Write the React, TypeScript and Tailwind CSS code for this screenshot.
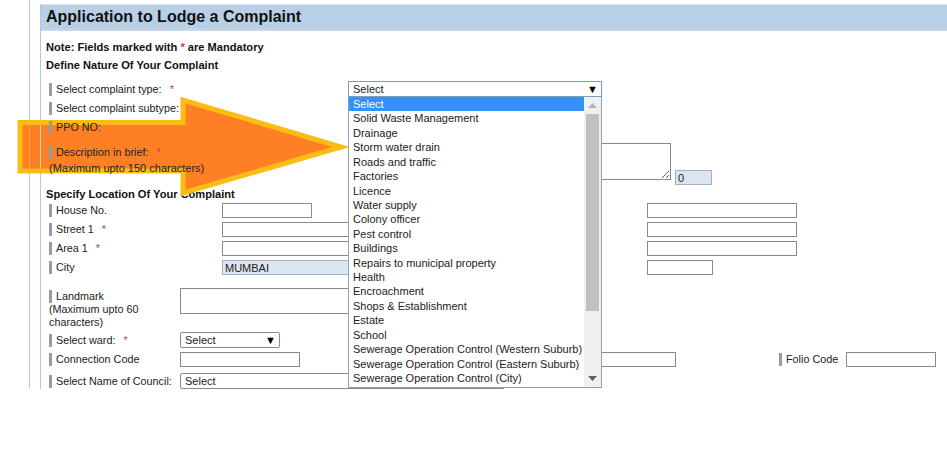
const complaintTypes = [
  'Select',
  'Solid Waste Management',
  'Drainage',
  'Storm water drain',
  'Roads and traffic',
  'Factories',
  'Licence',
  'Water supply',
  'Colony officer',
  'Pest control',
  'Buildings',
  'Repairs to municipal property',
  'Health',
  'Encroachment',
  'Shops & Establishment',
  'Estate',
  'School',
  'Sewerage Operation Control (Western Suburb)',
  'Sewerage Operation Control (Eastern Suburb)',
  'Sewerage Operation Control (City)',
];

const inputCls = 'h-[15px] border border-[#8a8a8a] bg-white block shrink-0';
const headingCls = 'h-[14px] flex items-center font-bold text-[11.1px] text-[#111]';

function Label({ text, required, className = '' }: { text: string; required?: boolean; className?: string }) {
  return (
    <span className={`flex items-center shrink-0 text-[10.8px] ${className}`}>
      <span className="w-[3px] h-[13px] bg-[#969ca6] mr-[4px] shrink-0" />
      <span>{text}</span>
      {required ? <span className="text-[#b5454a] ml-[8px]">*</span> : null}
    </span>
  );
}

function NativeSelect({ className }: { className: string }) {
  return (
    <div className={`flex items-center justify-between border border-[#8a8a8a] rounded-[2px] bg-white pl-[4px] pr-[3px] shrink-0 ${className}`}>
      <span>Select</span>
      <span className="text-[11px] leading-none text-black">▼</span>
    </div>
  );
}

function ComplaintDropdown() {
  return (
    <div className="absolute z-20 left-[348px] top-[81px] w-[254px] text-[#222]">
      <div className="h-[16px] flex items-center justify-between border border-[#7f9db9] bg-white pl-[4px] pr-[3px]">
        <span>Select</span>
        <span className="text-[11px] leading-none text-black">▼</span>
      </div>
      <div className="h-[291px] flex border border-t-0 border-[#8ea2bc] bg-white">
        <ul className="flex-1 list-none">
          {complaintTypes.map((t, i) => (
            <li
              key={t}
              className={`h-[14.43px] leading-[14.43px] pl-[4px] whitespace-nowrap ${i === 0 ? 'bg-[#3390ff] text-white' : ''}`}
            >
              {t}
            </li>
          ))}
        </ul>
        <div className="w-[17px] bg-[#f0f0f0] flex flex-col items-center shrink-0">
          <div className="h-[17px] flex items-center justify-center">
            <svg width="9" height="5" viewBox="0 0 9 5"><path d="M4.5 0 9 5H0z" fill="#b4b4b4" /></svg>
          </div>
          <div className="w-[13px] h-[197px] bg-[#c0c0c0]" />
          <div className="flex-1" />
          <div className="h-[17px] flex items-center justify-center">
            <svg width="9" height="5" viewBox="0 0 9 5"><path d="M4.5 5 9 0H0z" fill="#606060" /></svg>
          </div>
        </div>
      </div>
    </div>
  );
}

function ArrowCallout() {
  return (
    <svg className="absolute z-[5] left-[15px] top-[92px]" width="340" height="110" viewBox="0 0 340 110">
      <path
        d="M5 30.5 H168 V8 L326 55 L168 101 V79 H5 Z"
        fill="#ff7f24"
        stroke="#fbbc14"
        strokeWidth="5"
      />
      {/* page rules showing faintly through the arrow */}
      <path d="M14.5 33V76.5" stroke="#ff9a50" />
      <path d="M25.5 33V76.5" stroke="#ffc9a0" />
    </svg>
  );
}

export default function App() {
  return (
    <div className="relative w-[947px] h-[462px] bg-white overflow-hidden text-[11px] text-[#222]" style={{ fontFamily: '"Liberation Sans", Arial, sans-serif' }}>
      <div className="h-[389px] ml-[29px] border-l border-[#bccadb] pl-[10px] overflow-hidden">
        <div className="h-full border-l border-[#b7c6d9] flex flex-col mt-[4px]">
          <div className="h-[27px] shrink-0 bg-[#b8cfe6] border-t border-[#dbe6f1] border-b-2 border-b-[#c9d8e8] flex items-center pl-[5px] text-[16px] font-bold text-[#111]">
            Application to Lodge a Complaint
          </div>

          <div className="pl-[5px] flex flex-col">
            <div className={`${headingCls} mt-[9px]`}>
              Note: Fields marked with&nbsp;<span className="text-[#b5454a]">*</span>&nbsp;are Mandatory
            </div>
            <div className={`${headingCls} mt-[4px]`}>Define Nature Of Your Complaint</div>

            <div className="h-[18px] mt-[8px] flex items-center pl-[3px]"><Label text="Select complaint type:" required /></div>
            <div className="h-[18px] mt-[1px] flex items-center pl-[3px]"><Label text="Select complaint subtype:" required /></div>
            <div className="h-[18px] mt-[1px] flex items-center pl-[3px] relative z-10"><Label text="PPO NO:" /></div>

            <div className="h-[37px] mt-[7px] flex pl-[3px]">
              <div className="w-[299px] pt-[2px] shrink-0 relative z-10">
                <Label text="Description in brief:" required className="h-[14px]" />
                <div className="mt-[1px]">(Maximum upto 150 characters)</div>
              </div>
              <textarea readOnly className="w-[323px] h-[37px] border border-[#8a8a8a] bg-white resize-y shrink-0" />
              <div className="ml-[4px] self-end mb-[-5px] w-[37px] h-[15px] border border-[#a3b0c0] bg-[#dce6f1] pl-[2px] leading-[14px] shrink-0">0</div>
            </div>

            <div className={`${headingCls} mt-[7px]`}>Specify Location Of Your Complaint</div>

            <div className="h-[15px] mt-[2px] flex items-center pl-[3px]">
              <Label text="House No." className="w-[173px]" />
              <span className={`${inputCls} w-[90px]`} />
              <span className={`${inputCls} w-[150px] ml-[335px]`} />
            </div>
            <div className="h-[15px] mt-[4px] flex items-center pl-[3px]">
              <Label text="Street 1" required className="w-[173px]" />
              <span className={`${inputCls} w-[150px]`} />
              <span className={`${inputCls} w-[150px] ml-[275px]`} />
            </div>
            <div className="h-[15px] mt-[4px] flex items-center pl-[3px]">
              <Label text="Area 1" required className="w-[173px]" />
              <span className={`${inputCls} w-[150px]`} />
              <span className={`${inputCls} w-[150px] ml-[275px]`} />
            </div>
            <div className="h-[15px] mt-[4px] flex items-center pl-[3px]">
              <Label text="City" className="w-[173px]" />
              <span className="h-[15px] w-[150px] border border-[#a3b0c0] bg-[#dce6f1] pl-[2px] leading-[14px] shrink-0">MUMBAI</span>
              <span className={`${inputCls} w-[66px] ml-[275px]`} />
            </div>

            <div className="h-[40px] mt-[13px] flex pl-[3px]">
              <div className="w-[131px] shrink-0 leading-[12.5px] pt-[2px]">
                <Label text="Landmark" />
                <div className="text-[10.8px]">(Maximum upto 60</div>
                <div className="text-[10.8px]">characters)</div>
              </div>
              <span className="h-[26px] w-[200px] border border-[#8a8a8a] bg-white shrink-0" />
            </div>

            <div className="h-[16px] mt-[4px] flex items-center pl-[3px]">
              <Label text="Select ward:" required className="w-[131px]" />
              <NativeSelect className="w-[100px] h-[16px]" />
            </div>
            <div className="h-[15px] mt-[4px] flex items-center pl-[3px]">
              <Label text="Connection Code" className="w-[131px]" />
              <span className={`${inputCls} w-[120px]`} />
              <span className={`${inputCls} w-[120px] ml-[256px]`} />
              <Label text="Folio Code" className="w-[67px] ml-[103px]" />
              <span className={`${inputCls} w-[90px]`} />
            </div>
            <div className="h-[16px] mt-[6px] flex items-center pl-[3px]">
              <Label text="Select Name of Council:" className="w-[131px]" />
              <div className="h-[16px] w-[325px] border border-[#8a8a8a] rounded-[2px] bg-white pl-[4px] leading-[14px] shrink-0">Select</div>
            </div>
          </div>
        </div>
      </div>

      <ArrowCallout />
      <ComplaintDropdown />
    </div>
  );
}
